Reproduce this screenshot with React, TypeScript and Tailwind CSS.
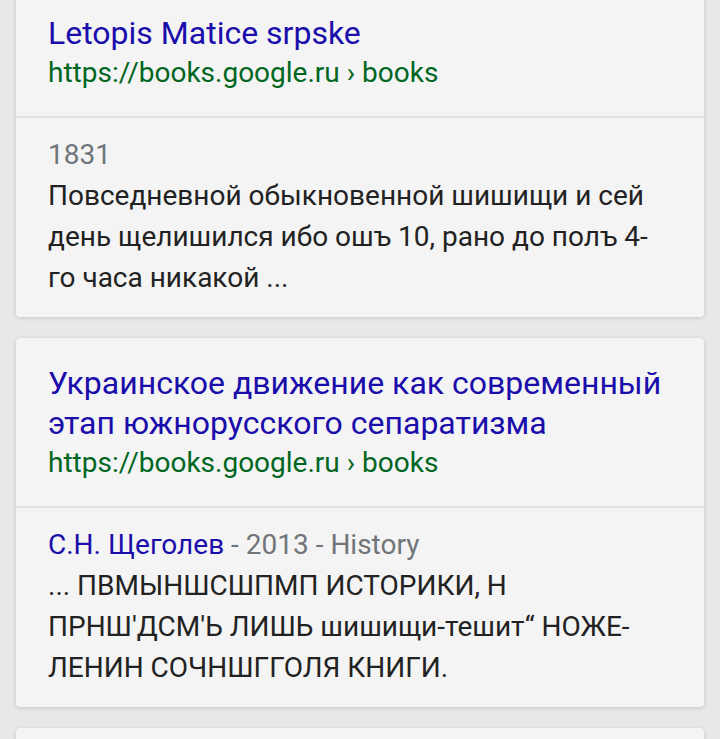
import React from "react";

const font = { fontFamily: "Roboto, 'Noto Sans', sans-serif" };

function ResultCard({
  title,
  url,
  meta,
  lines,
  className = "",
}: {
  title: string[];
  url: string;
  meta: React.ReactNode;
  lines: string[];
  className?: string;
}) {
  return (
    <div
      className={`mx-4 rounded-[4px] bg-[#f4f4f4] shadow-[0_1px_4px_rgba(0,0,0,0.14)] ${className}`}
    >
      {/* Head */}
      <div className="px-8 pt-[25px] pb-[23px] border-b-2 border-[#e2e2e2]">
        <a className="block text-[32px] leading-[40px] text-[#1a0dab]">
          {title.map((t) => (
            <span key={t} className="block whitespace-nowrap">
              {t}
            </span>
          ))}
        </a>
        <div className="text-[28px] leading-[40px] text-[#006621]">{url}</div>
      </div>

      {/* Snippet */}
      <div className="px-8 pt-[17px] pb-[19px]">
        <div className="text-[28px] leading-[40px] text-[#70757a]">{meta}</div>
        <div className="text-[28px] leading-[41px] text-[#222222]">
          {lines.map((l) => (
            <span key={l} className="block whitespace-nowrap">
              {l}
            </span>
          ))}
        </div>
      </div>
    </div>
  );
}

export default function App() {
  return (
    <div className="h-[739px] overflow-hidden bg-[#e8e8e8]" style={font}>
      <div className="-mt-[12px] flex flex-col gap-[21px]">
        <ResultCard
          title={["Letopis Matice srpske"]}
          url="https://books.google.ru › books"
          meta="1831"
          lines={[
            "Повседневной обыкновенной шишищи и сей",
            "день щелишился ибо ошъ 10, рано до полъ 4-",
            "го часа никакой ...",
          ]}
        />
        <ResultCard
          title={[
            "Украинское движение как современный",
            "этап южнорусского сепаратизма",
          ]}
          url="https://books.google.ru › books"
          meta={
            <>
              <span className="text-[#1a0dab]">С.Н. Щеголев</span> - 2013 - History
            </>
          }
          lines={[
            "... ПВМЫНШСШПМП ИСТОРИКИ, Н",
            "ПРНШ'ДСМ'Ь ЛИШЬ шишищи-тешит“ НОЖЕ-",
            "ЛЕНИН СОЧНШГГОЛЯ КНИГИ.",
          ]}
        />
        <div className="mx-4 h-[60px] rounded-[4px] bg-[#f4f4f4] shadow-[0_1px_4px_rgba(0,0,0,0.14)]" />
      </div>
    </div>
  );
}
